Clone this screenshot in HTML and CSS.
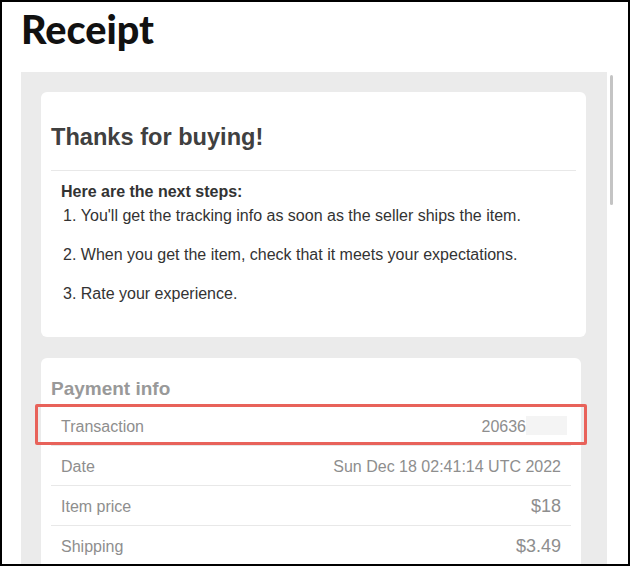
FILE: index.html
```html
<!DOCTYPE html>
<html lang="en">
<head>
<meta charset="utf-8">
<title>Receipt</title>
<link rel="stylesheet" href="styles.css">
</head>
<body>
<div class="frame">
  <h1 class="title">Receipt</h1>
  <div class="viewer">
    <div class="panel">
      <section class="card">
        <h2 class="card-heading">Thanks for buying!</h2>
        <div class="steps">
          <p class="steps-title">Here are the next steps:</p>
          <ol class="steps-list">
            <li>You'll get the tracking info as soon as the seller ships the item.</li>
            <li>When you get the item, check that it meets your expectations.</li>
            <li>Rate your experience.</li>
          </ol>
        </div>
      </section>
      <section class="card card-payment">
        <h3 class="section-title">Payment info</h3>
        <div class="rows">
          <div class="row"><span class="label">Transaction</span><span class="value">20636<span class="redact"></span></span></div>
          <div class="row"><span class="label">Date</span><span class="value">Sun Dec 18 02:41:14 UTC 2022</span></div>
          <div class="row"><span class="label">Item price</span><span class="value price">$18</span></div>
          <div class="row"><span class="label">Shipping</span><span class="value price">$3.49</span></div>
        </div>
        <div class="highlight"></div>
      </section>
    </div>
    <div class="track"><div class="thumb"></div></div>
  </div>
</div>
</body>
</html>
```

FILE: styles.css
```css
html, body {
  margin: 0;
  padding: 0;
  background: #fff;
}
.frame {
  box-sizing: border-box;
  width: 630px;
  height: 566px;
  border: 2px solid #000;
  overflow: hidden;
  padding-left: 19px;
  position: relative;
}
.title {
  font-family: Lato, "Liberation Sans", sans-serif;
  font-weight: 900;
  font-size: 39.5px;
  line-height: 1.2;
  color: #111;
  margin: 3px 0 20px 0;
}
.viewer {
  display: flex;
  align-items: flex-start;
}
.panel {
  width: 586px;
  box-sizing: border-box;
  background: #ebebeb;
  padding: 20px 21px 60px 20px;
  font-family: "Liberation Sans", Arial, sans-serif;
}
.track {
  width: 8px;
  padding: 3px 0 0 3px;
}
.thumb {
  width: 3px;
  height: 130px;
  border-radius: 2px;
  background: #c4c4c4;
}
.card {
  background: #fff;
  border-radius: 6px;
  padding: 10px;
  margin-bottom: 21px;
  position: relative;
}
.card-payment {
  margin-right: 5px;
}
.card-heading {
  margin: 22px 0 0 0;
  font-size: 23.6px;
  font-weight: 700;
  color: #404040;
  padding-bottom: 19px;
  border-bottom: 1px solid #e8e8e8;
}
.steps {
  padding: 8.5px 10px 6px 10px;
  font-size: 16px;
  line-height: 24px;
  color: #333;
}
.steps-title {
  margin: 0;
  font-weight: 700;
}
.steps-list {
  margin: 0;
  padding: 0 0 0 2px;
  list-style-position: inside;
}
.steps-list li {
  margin-bottom: 15px;
}
.section-title {
  margin: 10px 0 6px 0;
  font-size: 19px;
  font-weight: 700;
  color: #999;
}
.row {
  display: flex;
  justify-content: space-between;
  align-items: baseline;
  height: 29px;
  padding: 10px 10px 0 10px;
  border-bottom: 1px solid #e8e8e8;
  font-size: 16px;
  line-height: 22px;
  color: #8e8e8e;
}
.price {
  font-size: 18px;
  line-height: 18px;
}
.redact {
  display: inline-block;
  width: 41px;
  height: 19px;
  margin-right: -6px;
  vertical-align: -3px;
  background: #f4f4f4;
}
.highlight {
  position: absolute;
  left: -6px;
  top: 46px;
  width: 546px;
  height: 35px;
  border: 3px solid #e8625a;
  border-radius: 2px;
}
```
